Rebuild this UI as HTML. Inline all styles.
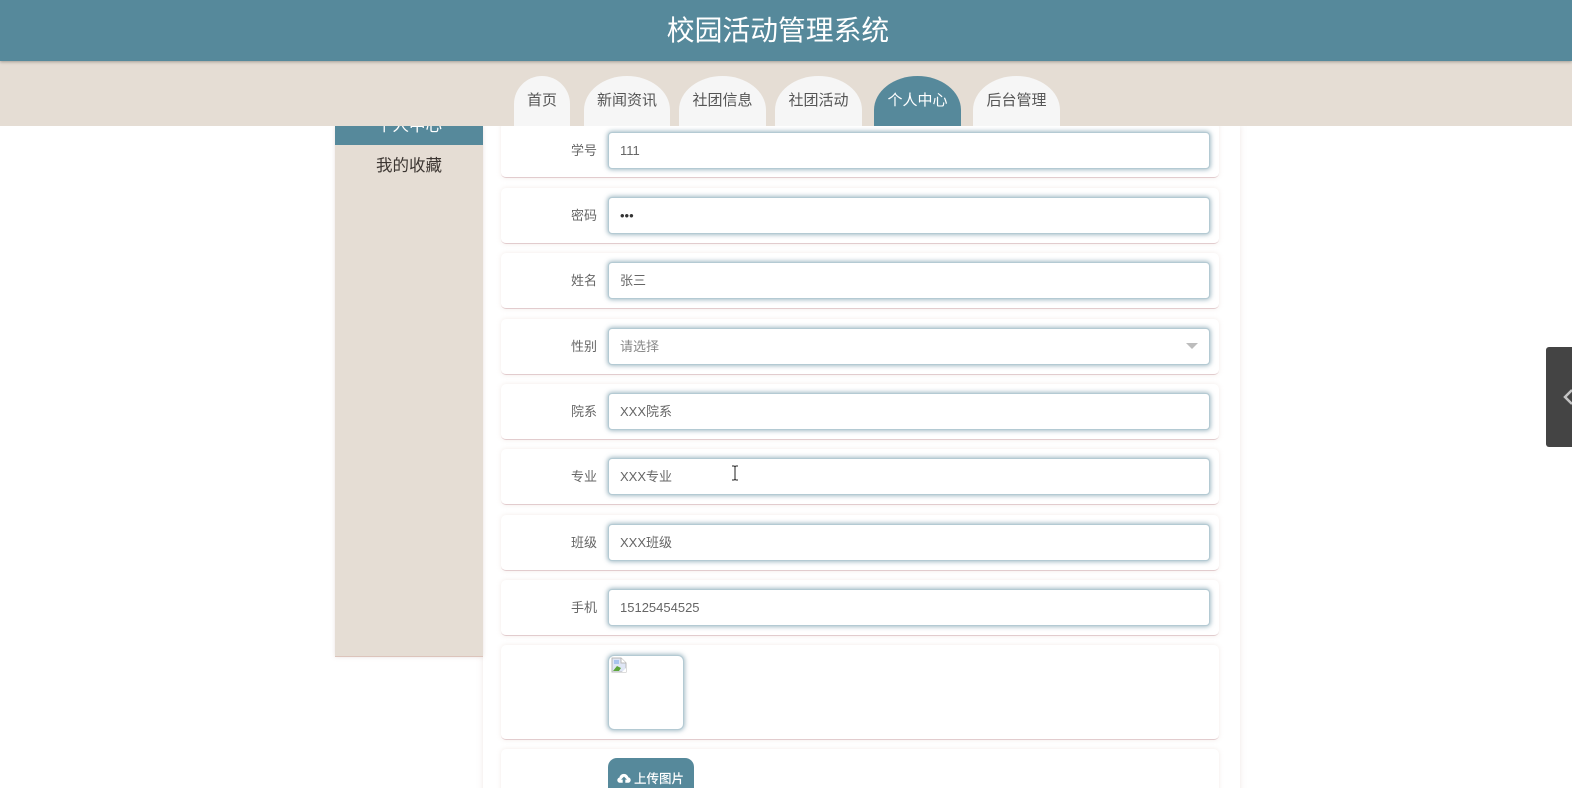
<!DOCTYPE html>
<html lang="zh-CN"><head><meta charset="utf-8"><title>校园活动管理系统</title>
<style>
*{box-sizing:border-box}
html,body{margin:0;padding:0;width:1572px;height:788px;overflow:hidden;background:#fff;font-family:"Liberation Sans","Noto Sans CJK SC",sans-serif}
#root{position:relative;width:1572px;height:788px;overflow:hidden;background:#fff;filter:blur(.35px)}
.a{position:absolute}
#hd{left:0;top:0;width:1556px;height:61px;color:#fff;font-size:27.8px;line-height:61px;text-align:center;z-index:6}
#hdbg{left:0;top:0;width:1572px;height:61px;background:#56899b;z-index:5;box-shadow:0 1px 3px rgba(0,0,0,.3)}
#nav{left:0;top:61px;width:1572px;height:65px;background:#e5ddd4;z-index:4}
.tab{position:absolute;top:76px;height:50px;background:#f6f6f6;color:#555;font-size:15px;line-height:50px;text-align:center;border-radius:50% 50% 0 0/34px 34px 0 0;z-index:5}
.tab.on{background:#56899b;color:#fff}
#main{left:483px;top:126px;width:757px;height:670px;background:#fff;box-shadow:0 0 6px rgba(190,160,150,.25)}
#side{left:335px;top:126px;width:148px;height:531px;background:#e5ddd4;border-bottom:1px solid #dcc4bb;box-shadow:0 0 4px rgba(190,160,150,.3)}
#act{left:335px;top:100px;width:148px;height:45px;background:#56899b;color:#fff;font-size:16.5px;line-height:52px;text-align:center}
#fav{left:335px;top:153px;width:148px;text-align:center;font-size:16.5px;line-height:26px;color:#3c3632}
.card{position:absolute;left:501px;width:718px;height:56px;background:#fff;border-radius:5px;border-bottom:1px solid #e2ccce;box-shadow:0 0 5px rgba(215,190,180,.3)}
.lb{position:absolute;left:0;width:96px;top:9px;height:37px;line-height:37px;text-align:right;font-size:13px;color:#666}
.in{position:absolute;left:107px;top:9px;width:602px;height:37px;line-height:36px;padding-left:11px;font-size:13px;color:#666;background:#fff;border-radius:4px;border:1px solid #b4cad3;box-shadow:0 0 4px 1px rgba(80,125,145,.5)}
.car{position:absolute;right:11px;top:14px;width:0;height:0;border-left:6px solid transparent;border-right:6px solid transparent;border-top:6px solid #bdbdbd}
#img{left:608px;top:655px;width:76px;height:75px;background:#fff;border:1px solid #b4cad3;border-radius:6px;box-shadow:0 0 4px 1px rgba(80,125,145,.5)}
#btn{left:608px;top:758px;width:86px;height:40px;background:#56899b;border-radius:9px;color:#fff;font-size:12.5px;line-height:42px;padding-left:26px;font-weight:500}
#pan{left:1546px;top:347px;width:26px;height:100px;background:#444;border-radius:3px 0 0 3px}
</style></head><body>
<div id="root">
<div class="a" id="main"></div>
<div class="a" id="side"></div>
<div class="a" id="act">个人中心</div>
<div class="a" id="fav">我的收藏</div>

<div class="card" style="top:122px"><div class="lb" style="top:10px">学号</div><div class="in" style="top:10px">111</div></div>
<div class="card" style="top:188px"><div class="lb">密码</div><div class="in" style="color:#333">•••</div></div>
<div class="card" style="top:253px"><div class="lb">姓名</div><div class="in">张三</div></div>
<div class="card" style="top:319px"><div class="lb">性别</div><div class="in" style="color:#888">请选择<span class="car"></span></div></div>
<div class="card" style="top:384px"><div class="lb">院系</div><div class="in">XXX院系</div></div>
<div class="card" style="top:449px"><div class="lb">专业</div><div class="in">XXX专业</div></div>
<div class="card" style="top:515px"><div class="lb">班级</div><div class="in">XXX班级</div></div>
<div class="card" style="top:580px"><div class="lb">手机</div><div class="in">15125454525</div></div>
<div class="card" style="top:645px;height:95px"></div>
<div class="card" style="top:749px;height:60px"></div>

<div class="a" id="img">
<svg width="16" height="16" viewBox="0 0 16 16" style="position:absolute;left:2px;top:1px"><path d="M1 1H10L15 6V15H1Z" fill="#dfe6f5" stroke="#b8b8b8" stroke-width="1"/><path d="M2 14L6 9L10 11L8 14Z" fill="#5da63c"/><path d="M3 3h5v4H3z" fill="#a9c4ee"/><path d="M10 1V6H15" fill="#fff" stroke="#b8b8b8"/><path d="M11 15L15 11V15Z" fill="#fff"/></svg>
</div>
<div class="a" id="btn"><svg width="14" height="11" viewBox="0 0 14 11" style="position:absolute;left:9px;top:15px"><path d="M3.2 9.8C1.4 9.8 .3 8.6 .3 7.1C.3 5.8 1.2 4.8 2.4 4.6C2.8 2.4 4.7 .9 6.9 .9C9 .9 10.8 2.3 11.3 4.3C12.7 4.5 13.7 5.7 13.7 7.1C13.7 8.6 12.5 9.8 11 9.8H8.3V6.6H10L7 3.6L4 6.6H5.7V9.8Z" fill="#fff"/></svg>上传图片</div>

<div class="a" id="hdbg"></div>
<div class="a" id="hd">校园活动管理系统</div>
<div class="a" id="nav"></div>
<div class="tab" style="left:514px;width:56px;border-radius:28px 28px 0 0/28px 28px 0 0">首页</div>
<div class="tab" style="left:584px;width:86px">新闻资讯</div>
<div class="tab" style="left:679px;width:87px">社团信息</div>
<div class="tab" style="left:775px;width:87px">社团活动</div>
<div class="tab on" style="left:874px;width:87px">个人中心</div>
<div class="tab" style="left:973px;width:87px">后台管理</div>

<div class="a" id="pan"><svg width="26" height="100" viewBox="0 0 26 100" style="position:absolute;left:0;top:0"><path d="M26 43L19 50L26 57" fill="none" stroke="#c4c4c4" stroke-width="2.5"/></svg></div>

<svg class="a" style="left:730px;top:465px;z-index:7" width="10" height="16" viewBox="0 0 10 16"><path d="M2 1H4.2L5 2L5.8 1H8M5 2V14M2 15H4.2L5 14L5.8 15H8" fill="none" stroke="#222" stroke-width="1"/></svg>
</div>
</body></html>
